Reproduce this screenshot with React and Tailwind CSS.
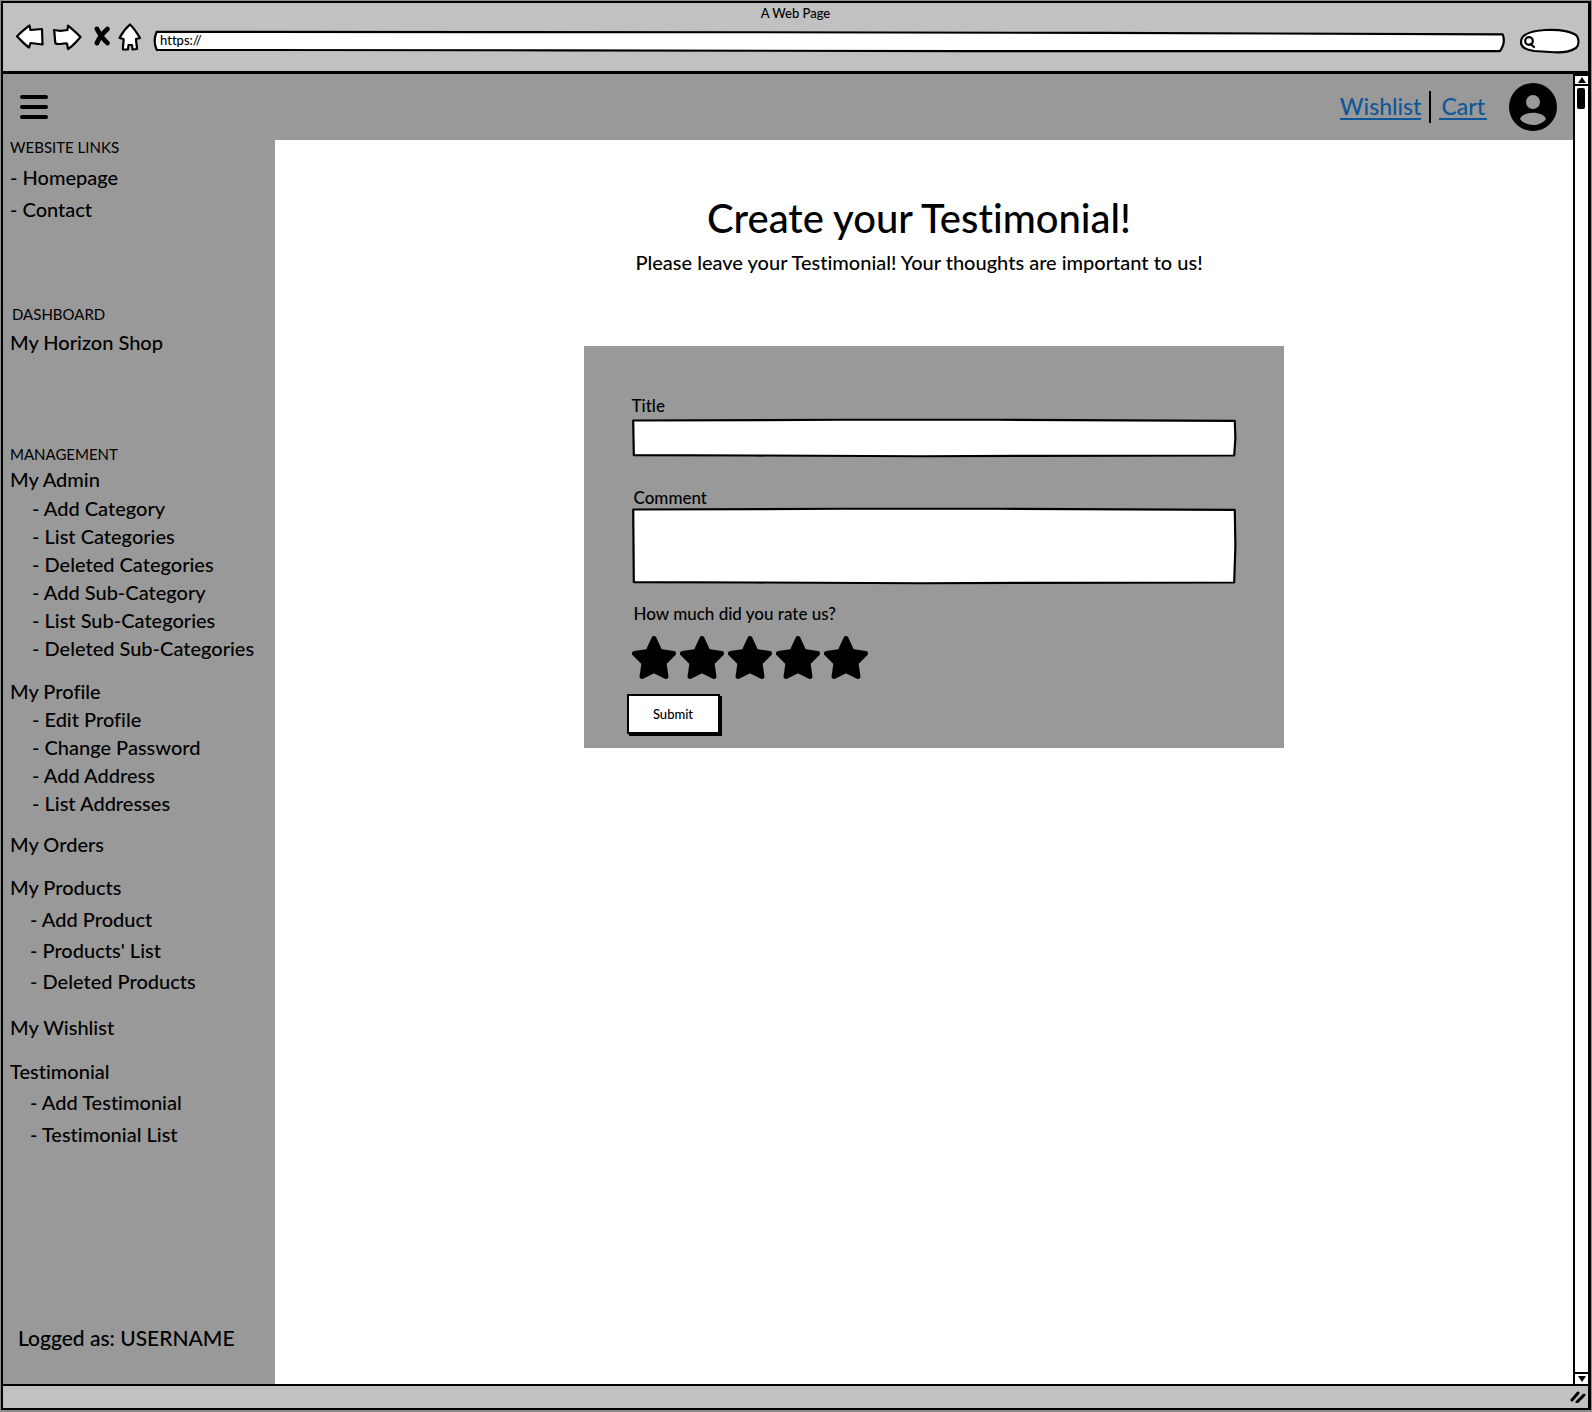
import { useState } from "react";

const linkGroups = [
  { title: "My Admin", space: "mt-px", list: "mt-px leading-7 pl-[22px]", items: ["Add Category", "List Categories", "Deleted Categories", "Add Sub-Category", "List Sub-Categories", "Deleted Sub-Categories"] },
  { title: "My Profile", space: "mt-[15px]", list: "leading-7 pl-[22px]", items: ["Edit Profile", "Change Password", "Add Address", "List Addresses"] },
  { title: "My Orders", space: "mt-[13px]", items: [] },
  { title: "My Products", space: "mt-[15px]", list: "mt-[3px] leading-[31px] pl-5", items: ["Add Product", "Products' List", "Deleted Products"] },
  { title: "My Wishlist", space: "mt-4", items: [] },
  { title: "Testimonial", space: "mt-4", list: "mt-px leading-8 pl-5", items: ["Add Testimonial", "Testimonial List"] },
];

function SketchBox({ d }) {
  return (
    <svg aria-hidden="true" viewBox="0 0 1000 100" preserveAspectRatio="none" className="pointer-events-none absolute inset-0 h-full w-full overflow-visible">
      <path d={d} fill="#fff" stroke="#000" strokeWidth="2.2" strokeLinejoin="round" vectorEffect="non-scaling-stroke" />
    </svg>
  );
}

const titlePath = "M2 4 L350 2 L600 2 L998 5 L999 50 L997 96 L650 97 L480 98 L200 96 L3 95 L2.500 50 Z";
const commentPath = "M2 2 L350 1 L600 1 L998 2.500 L999 50 L997 98 L650 98.500 L480 99 L200 98 L3 97.500 L2.500 50 Z";

function ChromeButton({ label, className, viewBox, children }) {
  return (
    <button type="button" aria-label={label} className={className}>
      <svg viewBox={viewBox} className="block h-full w-full overflow-visible" fill="#fff" stroke="#000" strokeWidth="2.2" strokeLinejoin="round" strokeLinecap="round">
        {children}
      </svg>
    </button>
  );
}

function BrowserBar() {
  return (
    <header className="shrink-0 border-b-[3px] border-black bg-[#c1c1c1] pb-[18px]">
      <div className="h-5 text-center text-[13px] leading-[21px]">A Web Page</div>
      <div className="flex h-[30px] items-start pr-[9px] pl-[13px]">
        <ChromeButton label="Back" className="mt-0.5 h-6 w-7 shrink-0" viewBox="0 0 28 24">
          <path d="M1 11.500 C5 7 9 4 13.500 0.500 L14.500 5 L26 4 L26.500 19.500 L14.500 18 L13 22.500 C9 20 5 15 1 11.500 Z" />
        </ChromeButton>
        <ChromeButton label="Forward" className="mt-0.5 ml-[9px] h-6 w-7 shrink-0" viewBox="0 0 28 24">
          <path d="M1 5 C5 6 10 6 14.500 5 L15 0.500 C19 4 24 8 27.500 12 C24 16 20 21 15 24 L14 18.500 C10 18 6 20 2.500 18.500 C1.500 14 2 9 1 5 Z" />
        </ChromeButton>
        <ChromeButton label="Stop" className="mt-1 ml-[13px] h-[18px] w-4 shrink-0" viewBox="0 0 16 18">
          <path d="M3 2 C5 6 10 13 13.500 16 M13.500 2 C9 6 5 11 3 16" fill="none" strokeWidth="4.800" />
        </ChromeButton>
        <ChromeButton label="Home" className="mt-px ml-[9px] h-[26px] w-[22px] shrink-0" viewBox="0 0 22 26">
          <path d="M11 0.500 C15 4 18 9 21 14 L17 15 C17 18 18 22 18 25 L13.500 25.500 L13 21 L9.500 21 L9 25.500 L4 25.500 C3.500 22 5 18 4.500 15 L0.500 14 C3 9 7 4 11 0.500 Z" />
        </ChromeButton>
        <div className="relative mt-2 ml-[13px] h-[21px] flex-1">
          <SketchBox d="M2 4 L450 6 L700 9 L999 16 Q1001.500 55 997 96 L600 96 L300 92 L2 90 Q-1 45 2 4 Z" />
          <input aria-label="Address" defaultValue="https://" className="relative block h-[19px] w-full bg-transparent pl-1.5 text-[13px] leading-[19px] outline-none" />
        </div>
        <div className="relative mt-1.5 ml-4 h-6 w-[59px] shrink-0">
          <svg aria-hidden="true" viewBox="0 0 59 24" className="absolute inset-0 h-full w-full overflow-visible" fill="#fff" stroke="#000" strokeWidth="2.200">
            <path d="M1 13 C1 6 9 2 25 1 C41 0 53 3 57 7 C59 11 59 16 56 19 C50 23 40 24 30 23 L14 22 C6 21 1 18 1 13 Z" />
            <circle cx="9" cy="12" r="3.800" fill="none" />
            <path d="M10.500 15 L14 18" strokeLinecap="round" />
          </svg>
          <input aria-label="Search" className="relative block h-6 w-full bg-transparent pr-2 pl-4 text-[13px] outline-none" />
        </div>
      </div>
    </header>
  );
}

function ItemList({ items, className }) {
  return (
    <ul className={className}>
      {items.map((item) => (
        <li key={item}>
          <a href="#">- {item}</a>
        </li>
      ))}
    </ul>
  );
}

function Sidebar() {
  return (
    <aside className="flex w-[272px] shrink-0 flex-col bg-[#999] pl-[7px] text-[20px] leading-7 whitespace-nowrap">
      <button type="button" aria-label="Menu" className="mt-[21px] ml-2.5 flex h-6 w-7 flex-col justify-between">
        <span className="h-1 w-full rounded-full bg-black" />
        <span className="h-1 w-full rounded-full bg-black" />
        <span className="h-1 w-full rounded-full bg-black" />
      </button>
      <nav aria-label="Site" className="flex flex-col">
        <h2 className="mt-[18px] text-[15px] leading-5 font-normal">WEBSITE LINKS</h2>
        <ItemList className="mt-1 leading-8" items={["Homepage", "Contact"]} />
        <h2 className="mt-[79px] pl-0.5 text-[15px] leading-5 font-normal">DASHBOARD</h2>
        <a href="#" className="mt-1">My Horizon Shop</a>
        <h2 className="mt-[88px] text-[15px] leading-5 font-normal">MANAGEMENT</h2>
        {linkGroups.map((group) => (
          <div key={group.title} className={group.space}>
            <a href="#" className="block">{group.title}</a>
            {group.items.length > 0 && <ItemList items={group.items} className={group.list} />}
          </div>
        ))}
      </nav>
      <p className="mt-auto pb-8 pl-2 text-[21px]">Logged as: USERNAME</p>
    </aside>
  );
}

function TopNav() {
  return (
    <nav aria-label="Account" className="flex h-[66px] shrink-0 items-center justify-end bg-[#999] pr-4 text-[23px]">
      <a href="#" className="border-b-2 border-[#0f5799] leading-6 text-[#0f5799]">Wishlist</a>
      <span className="mx-2 h-8 w-0.5 bg-black" />
      <a href="#" className="border-b-2 border-[#0f5799] px-0.5 leading-6 text-[#0f5799]">Cart</a>
      <button type="button" aria-label="Profile" className="ml-[22px] h-12 w-12">
        <svg viewBox="0 0 48 48" className="block h-full w-full">
          <circle cx="24" cy="24" r="24" />
          <circle cx="24" cy="19" r="7" fill="#999" />
          <path d="M11 36 C14 27.500 34 27.500 37 36 C31 44 17 44 11 36 Z" fill="#999" />
        </svg>
      </button>
    </nav>
  );
}

function Rating() {
  const [rating, setRating] = useState(5);
  return (
    <fieldset className="mt-5">
      <legend className="pl-0.5 text-[17px] leading-5">How much did you rate us?</legend>
      <div className="mt-3 flex gap-1">
        {[1, 2, 3, 4, 5].map((n) => (
          <label key={n} className="relative block h-11 w-11 cursor-pointer">
            <input type="radio" name="rating" value={n} aria-label={`${n} stars`} checked={rating === n} onChange={() => setRating(n)} className="absolute inset-0 h-full w-full opacity-0" />
            <svg aria-hidden="true" viewBox="0 0 44 44" className="block h-full w-full" fill={n <= rating ? "#000" : "none"} stroke="#000" strokeWidth="5" strokeLinejoin="round">
              <path d="M22 2.500 L28 15.500 L41.500 17.500 L32 27 L34 40.500 L22 34.500 L10 40.500 L12 27 L2.500 17.500 L16 15.500 Z" />
            </svg>
          </label>
        ))}
      </div>
    </fieldset>
  );
}

function TestimonialForm() {
  return (
    <form onSubmit={(e) => e.preventDefault()} className="w-full max-w-[700px] bg-[#999] px-12 pt-[50px] pb-3.5">
      <label htmlFor="title" className="block text-[17px] leading-5">Title</label>
      <div className="relative mt-[3px] h-[38px]">
        <SketchBox d={titlePath} />
        <input id="title" className="relative block h-full w-full bg-transparent px-2 outline-none" />
      </div>
      <label htmlFor="comment" className="mt-[31px] block pl-0.5 text-[17px] leading-5">Comment</label>
      <div className="relative h-[76px]">
        <SketchBox d={commentPath} />
        <textarea id="comment" className="relative block h-full w-full resize-none bg-transparent p-2 outline-none" />
      </div>
      <Rating />
      <button type="submit" className="mt-3.5 -ml-[5px] block h-10 w-[93px] border-2 border-black bg-white pt-px text-[13px] shadow-[2px_2px_0_#000]">Submit</button>
    </form>
  );
}

function ScrollBar() {
  return (
    <div aria-hidden="true" className="flex w-[15px] shrink-0 flex-col border-t-2 border-l-2 border-black bg-white">
      <div className="flex h-2.5 items-center justify-center border-b-2 border-black">
        <svg viewBox="0 0 8 6" className="h-1.5 w-2"><path d="M4 0 L8 6 L0 6 Z" /></svg>
      </div>
      <div className="mt-0.5 ml-0.5 h-[21px] w-2 rounded-xs bg-black" />
      <div className="mt-auto flex h-3 items-center justify-center border-t-2 border-black">
        <svg viewBox="0 0 8 6" className="h-1.5 w-2"><path d="M0 0 L8 0 L4 6 Z" /></svg>
      </div>
    </div>
  );
}

export default function App() {
  return (
    <div className="flex min-h-screen flex-col bg-[#8b8e8a] px-px pt-px pb-0.5 font-['Lato','Liberation_Sans',sans-serif] font-medium text-black [font-variant-ligatures:no-common-ligatures]">
      <div className="flex flex-1 flex-col border-2 border-r-[3px] border-black">
        <BrowserBar />
        <div className="flex flex-1">
          <Sidebar />
          <div className="flex min-w-0 flex-1 flex-col bg-white">
            <TopNav />
            <main className="flex flex-1 flex-col items-center">
              <h1 className="mt-[54px] pr-2.5 text-center text-[40px] leading-12 font-medium">Create your Testimonial!</h1>
              <p className="mt-1.5 pr-2.5 text-center text-[20px] leading-7">Please leave your Testimonial! Your thoughts are important to us!</p>
              <div className="mt-[70px] flex w-full justify-center pl-[19px]">
                <TestimonialForm />
              </div>
            </main>
          </div>
          <ScrollBar />
        </div>
        <footer className="flex h-6 shrink-0 items-center justify-end border-t-2 border-black bg-[#c1c1c1] pr-0.5">
          <svg aria-hidden="true" viewBox="0 0 16 12" className="h-3 w-4" fill="none" stroke="#000" strokeWidth="3" strokeLinecap="round">
            <path d="M2 9 L8 2 M7 11 L14 4" />
          </svg>
        </footer>
      </div>
    </div>
  );
}
